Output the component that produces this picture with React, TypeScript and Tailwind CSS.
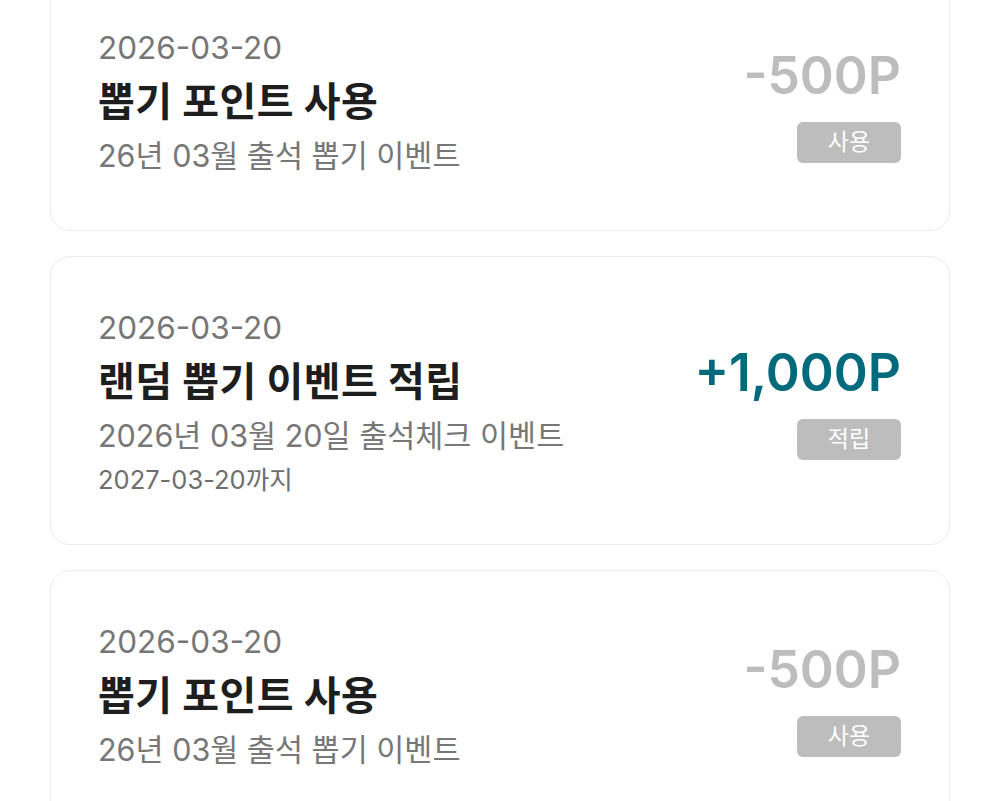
import React from "react";

type Entry = {
  id: number;
  date: string;
  title: string;
  desc: string;
  expires?: string;
  amount: string;
  earned: boolean;
};

const entries: Entry[] = [
  {
    id: 1,
    date: "2026-03-20",
    title: "뽑기 포인트 사용",
    desc: "26년 03월 출석 뽑기 이벤트",
    amount: "-500P",
    earned: false,
  },
  {
    id: 2,
    date: "2026-03-20",
    title: "랜덤 뽑기 이벤트 적립",
    desc: "2026년 03월 20일 출석체크 이벤트",
    expires: "2027-03-20까지",
    amount: "+1,000P",
    earned: true,
  },
  {
    id: 3,
    date: "2026-03-20",
    title: "뽑기 포인트 사용",
    desc: "26년 03월 출석 뽑기 이벤트",
    amount: "-500P",
    earned: false,
  },
];

const font = {
  fontFamily: '"Inter", "Noto Sans CJK KR", sans-serif',
};

export default function App() {
  return (
    <div className="h-[801px] w-[1000px] overflow-hidden bg-white" style={font}>
      <div className="mt-[-24px] flex flex-col gap-[25px] px-[50px]">
        {entries.map((e) => (
          <div
            key={e.id}
            className="flex items-center justify-between rounded-[20px] border border-[#ebebeb] bg-white pl-[47px] pr-[48px]"
          >
            {/* Left: details */}
            <div className="flex flex-col pt-[47px] pb-[50px]">
              <span className="text-[31.5px] leading-[48px] text-[#767676]">{e.date}</span>
              <span className="text-[40px] font-bold leading-[60px] tracking-[0.01em] text-[#1e1e1e]">
                {e.title}
              </span>
              <span className="text-[30.5px] leading-[48px] text-[#777777]">{e.desc}</span>
              {e.expires && (
                <span className="mt-[6px] text-[25.5px] leading-[28px] text-[#6e6e6e]">{e.expires}</span>
              )}
            </div>

            {/* Right: amount */}
            <div className="flex flex-col items-end">
              <span
                className={
                  e.earned
                    ? "text-[51.5px] font-semibold leading-[60px] text-[#006a7d]"
                    : "text-[51.5px] font-semibold leading-[60px] text-[#bdbdbd]"
                }
              >
                {e.amount}
              </span>
              <span className="mt-[17px] flex h-[41px] w-[104px] items-center justify-center rounded-[6px] bg-[#bdbdbd] text-[23px] text-white">
                {e.earned ? "적립" : "사용"}
              </span>
            </div>
          </div>
        ))}
      </div>
    </div>
  );
}
